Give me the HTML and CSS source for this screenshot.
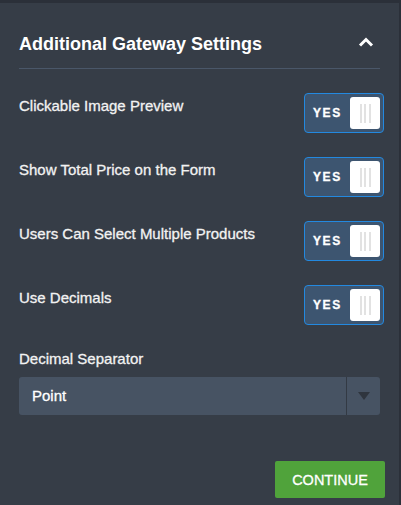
FILE: index.html
```html
<!DOCTYPE html>
<html lang="en">
<head>
  <meta charset="UTF-8">
  <meta name="viewport" content="width=device-width, initial-scale=1.0">
  <title>Additional Gateway Settings</title>
  <link rel="stylesheet" href="styles.css">
</head>
<body>
  <div class="panel">
    <header class="panel-head">
      <h2>Additional Gateway Settings</h2>
      <svg class="chevron" width="16" height="10" viewBox="0 0 16 10">
        <polyline points="2,8.5 8,2.5 14,8.5" fill="none" stroke="#fff" stroke-width="3"/>
      </svg>
    </header>

    <div class="settings">
      <div class="row">
        <span class="label">Clickable Image Preview</span>
        <div class="toggle"><span class="yes">YES</span><span class="knob"><i></i><i></i><i></i></span></div>
      </div>
      <div class="row">
        <span class="label">Show Total Price on the Form</span>
        <div class="toggle"><span class="yes">YES</span><span class="knob"><i></i><i></i><i></i></span></div>
      </div>
      <div class="row">
        <span class="label">Users Can Select Multiple Products</span>
        <div class="toggle"><span class="yes">YES</span><span class="knob"><i></i><i></i><i></i></span></div>
      </div>
      <div class="row">
        <span class="label">Use Decimals</span>
        <div class="toggle"><span class="yes">YES</span><span class="knob"><i></i><i></i><i></i></span></div>
      </div>
    </div>

    <div class="field">
      <div class="label">Decimal Separator</div>
      <div class="select">
        <span class="select-value">Point</span>
        <span class="select-arrow"></span>
      </div>
    </div>

    <div class="actions">
      <button class="continue">CONTINUE</button>
    </div>
  </div>
</body>
</html>
```

FILE: styles.css
```css
body {
  margin: 0;
  background: #2b3039;
  font-family: "Liberation Sans", Arial, sans-serif;
  color: #f2f2f2;
}

.panel {
  margin: 3px 2px 0 0;
  height: 502px;
  background: #363d47;
  padding: 30px 19px 0 19px;
  box-sizing: border-box;
}

.panel-head {
  display: flex;
  justify-content: space-between;
  align-items: flex-start;
  padding-bottom: 13px;
  border-bottom: 1px solid #4a5769;
}

.panel-head h2 {
  margin: 0;
  font-size: 18px;
  line-height: 22px;
  font-weight: bold;
  color: #fff;
}

.chevron {
  margin-top: 4px;
  margin-right: 6px;
}

.settings {
  display: flex;
  flex-direction: column;
  gap: 24px;
  padding-top: 24px;
}

.row {
  display: flex;
  justify-content: space-between;
  align-items: flex-start;
}

.label {
  font-size: 15px;
  line-height: 18px;
  -webkit-text-stroke: 0.3px currentColor;
}

.row .label {
  padding-top: 4px;
}

.toggle {
  width: 80px;
  height: 40px;
  box-sizing: border-box;
  margin-right: -4px;
  border: 1px solid #2389e0;
  border-radius: 4px;
  background: #3d5570;
  padding: 3px;
  display: flex;
  justify-content: space-between;
  align-items: center;
}

.yes {
  padding-left: 5px;
  font-size: 12px;
  font-weight: bold;
  letter-spacing: 1.6px;
  color: #fff;
  -webkit-text-stroke: 0.3px currentColor;
}

.knob {
  width: 30px;
  height: 32px;
  background: #fff;
  border-radius: 3px;
  display: flex;
  justify-content: center;
  align-items: center;
  gap: 2.5px;
}

.knob i {
  width: 2px;
  height: 19px;
  background: #e2e2e2;
}

.field {
  padding-top: 25px;
}

.select {
  margin-top: 9px;
  height: 38px;
  background: #475363;
  border-radius: 3px;
  display: flex;
  align-items: stretch;
}

.select-value {
  flex: 1;
  padding-left: 13px;
  font-size: 15px;
  line-height: 38px;
  color: #fff;
  -webkit-text-stroke: 0.3px currentColor;
}

.select-arrow {
  width: 33px;
  border-left: 1px solid #333a44;
  display: flex;
  justify-content: center;
  align-items: center;
}

.select-arrow::after {
  content: "";
  border-left: 6px solid transparent;
  border-right: 6px solid transparent;
  border-top: 8px solid #2f353e;
}

.actions {
  display: flex;
  justify-content: flex-end;
  padding-top: 46px;
}

.continue {
  width: 110px;
  height: 37px;
  margin-right: -5px;
  border: none;
  border-radius: 2px;
  background: #50a33b;
  color: #fff;
  font-family: "Liberation Sans", Arial, sans-serif;
  font-size: 14.5px;
  -webkit-text-stroke: 0.3px currentColor;
  cursor: pointer;
}
```
